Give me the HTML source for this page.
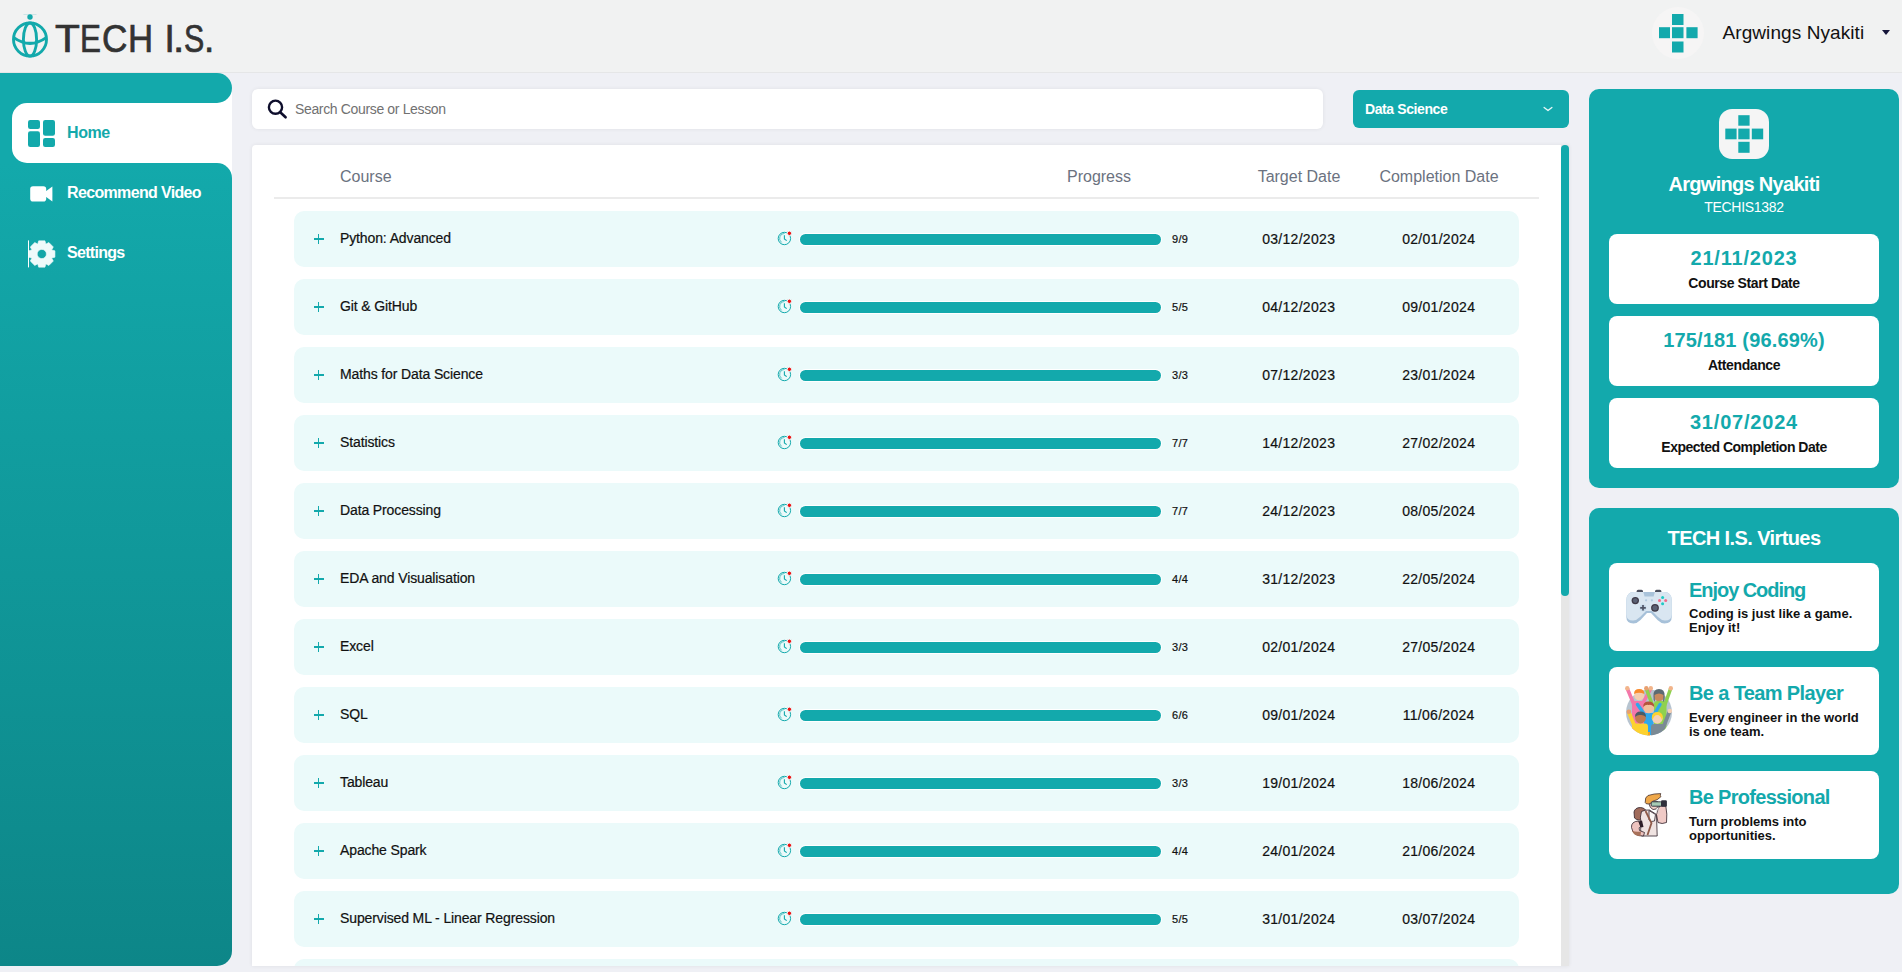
<!DOCTYPE html>
<html><head><meta charset="utf-8"><title>TECH I.S.</title>
<style>
*{margin:0;padding:0;box-sizing:border-box}
html,body{width:1902px;height:972px;overflow:hidden}
body{background:#eff0f5;font-family:"Liberation Sans",sans-serif;position:relative;color:#111}
.abs{position:absolute}
.header{position:absolute;left:0;top:0;width:1902px;height:73px;background:#f1f2f2;border-bottom:1px solid #e5e6e7}
.logo-text{position:absolute;left:55px;top:20.5px;font-size:37px;line-height:37px;color:#333;letter-spacing:-0.75px;white-space:nowrap;-webkit-text-stroke:0.7px #333}
.hdr-avatar{position:absolute;left:1652px;top:7px;width:52px;height:52px;border-radius:50%;background:#f6f5f5}
.hdr-name{position:absolute;left:1722.5px;top:23px;font-size:19px;line-height:19px;color:#111;white-space:nowrap;letter-spacing:0.08px}
.caret{position:absolute;left:1881.7px;top:29.6px;width:0;height:0;border-left:4.2px solid transparent;border-right:4.2px solid transparent;border-top:5.5px solid #16163a}

.sb-white{position:absolute;left:12px;top:88px;width:220px;height:90px;background:#fff}
.sb-tealleft{position:absolute;left:0;top:88px;width:40px;height:90px;background:#13a9ab}
.sb-top{position:absolute;left:0;top:73px;width:232px;height:30px;background:#13a9ab;border-radius:0 15px 15px 0}
.sb-home{position:absolute;left:12px;top:103px;width:220px;height:60px;background:#fff;border-radius:15px 0 0 15px}
.sb-low{position:absolute;left:0;top:163px;width:232px;height:803px;background:linear-gradient(#13a9ab,#0d8688);border-radius:0 15px 15px 0}
.nav{position:absolute;left:67px;font-size:16px;line-height:16px;white-space:nowrap;font-weight:bold}
.nav-home{top:125px;letter-spacing:-0.4px;color:#13a9ab}
.nav-rec{top:185px;letter-spacing:-0.65px;color:#fff}
.nav-set{top:245px;letter-spacing:-0.7px;color:#fff}

.search{position:absolute;left:252px;top:89px;width:1071px;height:40px;background:#fff;border-radius:6px;box-shadow:0 0 4px rgba(0,0,0,0.07)}
.search-ph{position:absolute;left:295px;top:102px;font-size:14px;line-height:14px;color:#717171;letter-spacing:-0.35px;white-space:nowrap}
.dd{position:absolute;left:1353px;top:90px;width:216px;height:38px;background:#13a9ac;border-radius:6px}
.dd-text{position:absolute;left:1365px;top:102px;font-size:14px;line-height:14px;color:#fff;font-weight:bold;letter-spacing:-0.4px;white-space:nowrap}

.tpanel{position:absolute;left:252px;top:145px;width:1317px;height:821px;background:#fff;overflow:hidden;border-radius:4px 0 0 0;box-shadow:0 0 4px rgba(0,0,0,0.07)}
.th{position:absolute;top:24px;font-size:16px;line-height:16px;color:#6b7280;white-space:nowrap}
.th-course{left:88px}
.th-prog{left:847px;transform:translateX(-50%)}
.th-target{left:1047px;transform:translateX(-50%)}
.th-comp{left:1187px;transform:translateX(-50%)}
.divider{position:absolute;left:22px;top:52px;width:1265px;height:2px;background:#ebebeb}
.row{position:absolute;left:42px;width:1225px;height:56px;background:#ebfafa;border-radius:10px}
.plus{position:absolute;left:19.5px;top:23px;width:10px;height:10px}
.plus:before{content:"";position:absolute;left:4.2px;top:0;width:1.7px;height:10px;background:#13a9ac}
.plus:after{content:"";position:absolute;left:0;top:4.2px;width:10px;height:1.7px;background:#13a9ac}
.cname{position:absolute;left:46px;top:20px;font-size:14px;line-height:14px;white-space:nowrap;color:#111;letter-spacing:-0.12px;-webkit-text-stroke:0.2px #111}
.clock{position:absolute;left:483px;top:19px}
.bar{position:absolute;left:505px;top:22px;width:363px;height:13px;background:#fff;border-radius:7px}
.fill{position:absolute;left:1px;top:1px;width:361px;height:11px;background:#13a9ac;border-radius:6px}
.cnt{position:absolute;left:878px;top:23px;font-size:11px;line-height:11px;white-space:nowrap;letter-spacing:0.3px;-webkit-text-stroke:0.2px #111}
.td,.cd{position:absolute;top:21px;font-size:14px;line-height:14px;white-space:nowrap;transform:translateX(-50%);letter-spacing:0.3px;-webkit-text-stroke:0.2px #111}
.td{left:1004.7px}
.cd{left:1144.7px}
.track{position:absolute;left:1309px;top:0;width:8px;height:821px;background:#e6e6e6}
.thumb{position:absolute;left:1309px;top:0;width:8px;height:451px;background:#13a9ac;border-radius:4px}

.rp{position:absolute;left:1589px;width:310px;background:#13a9ac;border-radius:10px}
.rp1{top:89px;height:399px}
.rp2{top:508px;height:386px}
.rp-avatar{position:absolute;left:1719px;top:109px;width:50px;height:50px;border-radius:13px;background:#f5f5f5}
.ctr{position:absolute;left:1744px;transform:translateX(-50%);white-space:nowrap;text-align:center}
.rp-name{top:174px;font-size:20px;line-height:20px;color:#fff;font-weight:bold;letter-spacing:-0.7px}
.rp-id{top:200px;font-size:14px;line-height:14px;color:#fff;letter-spacing:-0.3px}
.card{position:absolute;left:1609px;width:270px;background:#fff;border-radius:8px}
.card70{height:70px}
.cval{font-size:20px;line-height:20px;color:#13a9ac;font-weight:bold;letter-spacing:0.8px;margin-top:-2px}
.clab{font-size:14px;line-height:14px;color:#111;font-weight:bold;letter-spacing:-0.4px}
.vt-title{top:528px;font-size:20px;line-height:20px;color:#fff;font-weight:bold;letter-spacing:-0.6px}
.card88{height:88px}
.v-title{position:absolute;left:1689px;font-size:20px;line-height:20px;color:#13a9ac;font-weight:bold;letter-spacing:-0.9px;white-space:nowrap}
.v-desc{position:absolute;left:1689px;font-size:13px;line-height:14px;color:#111;font-weight:bold;letter-spacing:0px;white-space:nowrap}

.lg{position:absolute;top:19.5px;font-size:37px;line-height:37px;color:#333;white-space:nowrap;-webkit-text-stroke:0.7px #333;transform-origin:0 0}

</style></head>
<body>
<div class="header"></div>
<svg class="abs" style="left:10px;top:12px" width="42" height="48" viewBox="0 0 42 48">
 <path d="M13.5 2.3 H26.5" stroke="#13a9ab" stroke-width="0.6" opacity="0.35"/>
 <circle cx="20" cy="5" r="2.7" fill="#13a9ab"/>
 <circle cx="20" cy="27.5" r="16.5" fill="none" stroke="#13a9ab" stroke-width="2.9"/>
 <ellipse cx="20" cy="27.5" rx="6.6" ry="16.5" fill="none" stroke="#13a9ab" stroke-width="2.9"/>
 <path d="M3.8 25.6 Q20 37.2 36.2 25.6" fill="none" stroke="#13a9ab" stroke-width="3"/>
</svg>
<span class="lg" style="left:54.9px;transform:scale(1.1,1.04)">T</span><span class="lg" style="left:80.0px;transform:scale(0.85,1.04)">E</span><span class="lg" style="left:102.0px;transform:scale(0.95,1.04)">C</span><span class="lg" style="left:128.2px;transform:scale(0.94,1.04)">H</span><span class="lg" style="left:164.6px;transform:scale(1.0,1.04)">I</span><span class="lg" style="left:172.8px;transform:scale(1.1,1.04)">.</span><span class="lg" style="left:183.8px;transform:scale(0.82,1.04)">S</span><span class="lg" style="left:204.0px;transform:scale(1.0,1.04)">.</span>
<div class="hdr-avatar"></div>
<svg class="abs" style="left:1658px;top:13px" width="40" height="40" viewBox="0 0 40 40">
 <rect x="14" y="1" width="11.5" height="11" fill="#13a9ac"/>
 <rect x="1" y="14.2" width="11" height="11" fill="#13a9ac"/>
 <rect x="14" y="14.2" width="11.5" height="11" fill="#13a9ac"/>
 <rect x="28.4" y="14.2" width="11.2" height="11" fill="#13a9ac"/>
 <rect x="14" y="28.5" width="11.5" height="11" fill="#13a9ac"/>
</svg>
<div class="hdr-name">Argwings Nyakiti</div>
<div class="caret"></div>

<div class="sb-white"></div>
<div class="sb-tealleft"></div>
<div class="sb-top"></div>
<div class="sb-home"></div>
<div class="sb-low"></div>
<svg class="abs" style="left:28px;top:120px" width="27" height="27" viewBox="0 0 27 27">
 <rect x="0" y="0" width="12" height="9" rx="2.2" fill="#13a9ab"/>
 <rect x="0" y="11.3" width="12" height="15.7" rx="2.2" fill="#13a9ab"/>
 <rect x="15" y="0" width="12" height="15.8" rx="2.2" fill="#13a9ab"/>
 <rect x="15" y="18.1" width="12" height="8.9" rx="2.2" fill="#13a9ab"/>
</svg>
<div class="nav nav-home">Home</div>
<svg class="abs" style="left:30px;top:185.5px" width="24" height="17" viewBox="0 0 24 17">
 <rect x="0.2" y="0.2" width="16" height="15.4" rx="2.8" fill="#fff"/>
 <path d="M15.5 5.6 L22.4 0.4 V15.5 L15.5 10.4 Z" fill="#fff"/>
</svg>
<div class="nav nav-rec">Recommend Video</div>
<svg class="abs" style="left:28px;top:239.6px" width="28" height="28" viewBox="0 0 28 28" overflow="visible">
 <path fill="#eefafa" fill-rule="evenodd" stroke="#eefafa" stroke-width="0.6" stroke-linejoin="round" d="M9.75 3.99 L10.65 0.87 L16.95 0.87 L17.85 3.99 L18.02 4.06 L20.85 2.49 L25.31 6.95 L23.74 9.78 L23.81 9.95 L26.93 10.85 L26.93 17.15 L23.81 18.05 L23.74 18.22 L25.31 21.05 L20.85 25.51 L18.02 23.94 L17.85 24.01 L16.95 27.13 L10.65 27.13 L9.75 24.01 L9.58 23.94 L6.75 25.51 L2.29 21.05 L3.86 18.22 L3.79 18.05 L0.67 17.15 L0.67 10.85 L3.79 9.95 L3.86 9.78 L2.29 6.95 L6.75 2.49 L9.58 4.06 Z M18.40 14.00 A4.6 4.6 0 1 0 9.20 14.00 A4.6 4.6 0 1 0 18.40 14.00 Z"/>
 <rect x="0" y="0.4" width="1" height="27" fill="#ffffff"/>
</svg>
<div class="nav nav-set">Settings</div>

<div class="search"></div>
<svg class="abs" style="left:266px;top:98px" width="24" height="22" viewBox="0 0 24 22">
 <circle cx="9.5" cy="9.2" r="6.6" fill="none" stroke="#0e0e2c" stroke-width="2.4"/>
 <path d="M14.5 14.5 L19.6 19.3" stroke="#0e0e2c" stroke-width="2.6" stroke-linecap="round"/>
</svg>
<div class="search-ph">Search Course or Lesson</div>
<div class="dd"></div>
<div class="dd-text">Data Science</div>
<svg class="abs" style="left:1543px;top:106px" width="10" height="7" viewBox="0 0 10 7">
 <path d="M1.1 1.4 L5 4.6 L8.9 1.4" fill="none" stroke="#e8f8f8" stroke-width="1.3" stroke-linecap="round" stroke-linejoin="round"/>
</svg>

<div class="rp rp1"></div>
<div class="rp-avatar"></div>
<svg class="abs" style="left:1724px;top:114px" width="40" height="40" viewBox="0 0 40 40">
 <rect x="14.3" y="1.2" width="11.3" height="10.5" fill="#13a9ac"/>
 <rect x="1.3" y="14.6" width="11.3" height="10.7" fill="#13a9ac"/>
 <rect x="14.3" y="14.6" width="11.3" height="10.7" fill="#13a9ac"/>
 <rect x="27.8" y="14.6" width="11.4" height="10.7" fill="#13a9ac"/>
 <rect x="14.3" y="27.8" width="11.3" height="11" fill="#13a9ac"/>
</svg>
<div class="ctr rp-name">Argwings Nyakiti</div>
<div class="ctr rp-id">TECHIS1382</div>
<div class="card card70" style="top:234px"></div>
<div class="ctr cval" style="top:250px">21/11/2023</div>
<div class="ctr clab" style="top:276px">Course Start Date</div>
<div class="card card70" style="top:316px"></div>
<div class="ctr cval" style="top:332px;letter-spacing:0.15px">175/181 (96.69%)</div>
<div class="ctr clab" style="top:358px">Attendance</div>
<div class="card card70" style="top:398px"></div>
<div class="ctr cval" style="top:414px">31/07/2024</div>
<div class="ctr clab" style="top:440px;letter-spacing:-0.5px">Expected Completion Date</div>

<div class="rp rp2"></div>
<div class="ctr vt-title">TECH I.S. Virtues</div>
<div class="card card88" style="top:563px"></div>
<div class="v-title" style="top:579.5px;letter-spacing:-1.05px">Enjoy Coding</div>
<div class="v-desc" style="top:607px">Coding is just like a game.<br>Enjoy it!</div>
<div class="card card88" style="top:667px"></div>
<div class="v-title" style="top:683px;letter-spacing:-0.63px">Be a Team Player</div>
<div class="v-desc" style="top:711px">Every engineer in the world<br>is one team.</div>
<div class="card card88" style="top:771px"></div>
<div class="v-title" style="top:787px;letter-spacing:-0.7px">Be Professional</div>
<div class="v-desc" style="top:815px">Turn problems into<br>opportunities.</div>
<svg class="abs" style="left:1615px;top:580px" width="70" height="50" viewBox="0 0 70 50">
 <rect x="21.6" y="9.8" width="6.4" height="3.2" rx="1.5" fill="#4b4f5e"/>
 <rect x="40" y="9.8" width="6.4" height="3.2" rx="1.5" fill="#4b4f5e"/>
 <path d="M19 12.1 H49 Q56.8 12.1 56.8 21 V36.5 Q56.8 43.5 49.5 43.5 Q46 43.5 42.5 40 L36 33 H32 L25.5 40 Q22 43.5 18.5 43.5 Q11.3 43.5 11.3 36.5 V21 Q11.3 12.1 19 12.1 Z" fill="#a7c1d9"/>
 <path d="M19 12.1 H49 Q56.8 12.1 56.8 21 V34.5 Q56.8 40.5 50 40.5 Q46.5 40.5 43 37 L37 31 H31 L25 37 Q21.5 40.5 18 40.5 Q11.3 40.5 11.3 34.5 V21 Q11.3 12.1 19 12.1 Z" fill="#d9e6f1"/>
 <path d="M28.3 12.1 H39.9 L38.6 16.4 H29.6 Z" fill="#a9c3da"/>
 <circle cx="20.3" cy="20.6" r="3.7" fill="#3e3947"/><circle cx="20.3" cy="20.6" r="2.4" fill="#5a6073"/>
 <circle cx="40" cy="27.8" r="3.9" fill="#3e3947"/><circle cx="40" cy="27.8" r="2.6" fill="#5a6073"/>
 <circle cx="28" cy="27.8" r="3.4" fill="#c4d8e8"/>
 <path d="M28 25 V30.6 M25.2 27.8 H30.8" stroke="#4f5466" stroke-width="1.7"/>
 <circle cx="31.1" cy="20.3" r="1.1" fill="#b0c9df"/><circle cx="36.9" cy="20.3" r="1.1" fill="#b0c9df"/>
 <circle cx="47.6" cy="17.4" r="1.5" fill="#1ec9c4"/><circle cx="47.6" cy="23.7" r="1.5" fill="#1ec9c4"/>
 <circle cx="44.5" cy="20.6" r="1.5" fill="#f46b8a"/><circle cx="50.7" cy="20.6" r="1.5" fill="#f46b8a"/>
</svg>
<svg class="abs" style="left:1610px;top:670px" width="80" height="80" viewBox="0 0 80 80">
 <defs><clipPath id="tc"><circle cx="39" cy="42.5" r="23"/></clipPath></defs>
 <circle cx="39" cy="42.5" r="23" fill="#b7c4d0"/>
 <g stroke-linecap="round" fill="none" stroke-width="3.6">
  <path d="M17.5 19 L25 37" stroke="#f477aa"/><path d="M40.5 19 L33 33" stroke="#f477aa"/>
  <path d="M36.5 19 L42 34" stroke="#8fd14f"/><path d="M60.5 19 L53 40" stroke="#8fd14f"/>
 </g>
 <circle cx="17.3" cy="18.3" r="2.2" fill="#f2b48a"/><circle cx="40.8" cy="18.3" r="2.2" fill="#f2b48a"/>
 <circle cx="36.3" cy="18.3" r="2.2" fill="#e8a070"/><circle cx="60.8" cy="18.3" r="2.2" fill="#f2b48a"/>
 <g clip-path="url(#tc)">
  <rect x="22" y="31" width="14" height="30" rx="3" fill="#f477aa"/>
  <rect x="44" y="31" width="12.5" height="30" rx="3" fill="#8fd14f"/>
 </g>
 <circle cx="29.2" cy="25.5" r="5" fill="#f5cdb0"/><path d="M24 24 Q24 19 29.2 19 Q34.4 19 34.4 24 Q29 21.5 24 24 Z" fill="#f98a2c"/>
 <circle cx="49" cy="26" r="5.2" fill="#c98a5e"/><path d="M43.5 26 Q43 19 49 19 Q55 19 54.6 26 Q55 31 53 32 L53.5 25 Q49 22 44.5 25 L45 32 Q43 30 43.5 26Z" fill="#5c6b73"/>
 <g stroke-linecap="round" fill="none" stroke-width="3.4">
  <path d="M27.5 34.5 L33.5 43" stroke="#2fa8ec"/><path d="M50 34.5 L45 43" stroke="#2fa8ec"/>
 </g>
 <g clip-path="url(#tc)"><rect x="34" y="43" width="9.5" height="22" fill="#2fa8ec"/><rect x="37" y="62" width="3" height="4" fill="#f7a521"/></g>
 <circle cx="38.7" cy="38" r="5.3" fill="#f2c09c"/><path d="M33.2 37 Q33 31.5 38.7 31.5 Q44.4 31.5 44.2 37 Q41 34 38.7 35 Q36 34 33.2 37Z" fill="#b5533c"/>
 <path d="M19 42.5 L24.5 56" stroke="#fdd22f" stroke-width="3.8" stroke-linecap="round"/>
 <circle cx="18.9" cy="41.8" r="2.3" fill="#e8a070"/>
 <path d="M59.5 41.5 L53.5 57" stroke="#7b8a95" stroke-width="3.8" stroke-linecap="round"/>
 <circle cx="59.8" cy="41" r="2.3" fill="#f5d0b5"/>
 <g clip-path="url(#tc)">
  <rect x="22" y="53.5" width="16" height="14" rx="3" fill="#fdd22f"/>
  <rect x="41" y="54" width="14" height="14" rx="3" fill="#7b8a95"/>
 </g>
 <circle cx="30.5" cy="48" r="5.4" fill="#c07a50"/><path d="M25 47 Q25 41.5 30.5 41.5 Q36 41.5 36 47 Q33 44.5 30.5 45 Q27.5 44.5 25 47Z" fill="#4b5b66"/>
 <circle cx="47.3" cy="48.3" r="5.4" fill="#f5d0b5"/><path d="M41.8 47.5 Q41.8 42 47.3 42 Q52.8 42 52.8 47.5 L52 50 Q50.5 45 47.3 45 Q44 45 42.6 50Z" fill="#fdd22f"/>
</svg>
<svg class="abs" style="left:1610px;top:775px" width="80" height="80" viewBox="0 0 80 80">
 <g stroke="#2e1f28" stroke-width="0.8" stroke-linejoin="round">
 <path d="M24 37 Q25 32.5 30.5 32.5 Q35.5 33 36 36.5 L35 44.5 Q28 46.5 24.5 43 Z" fill="#a06b5b"/>
 <path d="M31.5 36.5 Q35 34.5 39.5 35 L46.5 39.5 L47.2 61 H31.5 Q30 55 31 48 Q29.5 42 31.5 36.5 Z" fill="#efe3e1"/>
 <path d="M39 35.5 L45.5 39.5 L44.5 46 Q41 47.5 39 45 Z" fill="#faf7f6"/>
 <path d="M21.5 52.5 Q21 46.5 28.5 46 L31 51 Q28 52.5 29.5 55.5 L34.5 57.5 L33.5 61 Q23 61.5 21.5 52.5 Z" fill="#edc3bf"/>
 <path d="M22 55.5 Q23.5 61 30.5 61 L31 56.5 Q25.5 57.5 22 55.5 Z" fill="#a8715a" stroke="none"/>
 <path d="M28.5 46.5 L32 45.5 L33.5 52 L30.5 52.5 Z" fill="#2e1f28" stroke="none"/>
 <path d="M46.5 39.5 Q48.5 33 49.5 31 L55.8 31 Q57.5 39 56.5 47.5 Q52 49.5 48 47.5 Z" fill="#f0cac6"/>
 <path d="M38.5 27.5 Q40 33.8 43 34.5 Q46.5 35 48 31.5 L47.5 26.5 Z" fill="#f3d2c9"/>
 </g>
 <path d="M35.5 36 L41.5 48 L37.5 60" fill="none" stroke="#8f5a48" stroke-width="1.8"/>
 <path d="M35.2 27.5 Q34.8 22 38 20.5 Q44 18.5 50.8 18.6 Q49.6 20.4 51 21.6 Q47.5 25.5 42.5 26.3 Q40.5 29.5 38.2 29 Q35.5 29 35.2 27.5Z" fill="#efa84a" stroke="#2e1f28" stroke-width="0.7"/>
 <rect x="41.2" y="26.8" width="10.5" height="4.4" rx="1" fill="#a6cbb4" stroke="#2d2d3a" stroke-width="0.9"/>
 <rect x="51" y="25.3" width="5.9" height="6.4" rx="1.3" fill="#2f2f3b"/>
 <path d="M46.8 33 V38.5 M48.8 33 V39.5" stroke="#dcd4d4" stroke-width="0.8"/>
</svg>

<div class="tpanel">
<div class="th th-course">Course</div>
<div class="th th-prog">Progress</div>
<div class="th th-target">Target Date</div>
<div class="th th-comp">Completion Date</div>
<div class="divider"></div>
<div class="row" style="top:66px">
<div class="plus"></div>
<div class="cname">Python: Advanced</div>
<svg class="clock" width="16" height="16" viewBox="0 0 16 16"><circle cx="7.4" cy="8.5" r="6.2" fill="none" stroke="#13a9ac" stroke-width="1"/><path d="M4.6 12.4 A5 5 0 0 1 7.6 3.4" fill="none" stroke="#13a9ac" stroke-width="0.8" opacity="0.85"/><path d="M7.4 5.3 V8.9 L9.7 10.6" fill="none" stroke="#13a9ac" stroke-width="1.1"/><circle cx="12.4" cy="3.3" r="2.2" fill="#ee1111" stroke="#ebfafa" stroke-width="1"/></svg>
<div class="bar"><div class="fill"></div></div>
<div class="cnt">9/9</div>
<div class="td">03/12/2023</div>
<div class="cd">02/01/2024</div>
</div>
<div class="row" style="top:134px">
<div class="plus"></div>
<div class="cname">Git &amp; GitHub</div>
<svg class="clock" width="16" height="16" viewBox="0 0 16 16"><circle cx="7.4" cy="8.5" r="6.2" fill="none" stroke="#13a9ac" stroke-width="1"/><path d="M4.6 12.4 A5 5 0 0 1 7.6 3.4" fill="none" stroke="#13a9ac" stroke-width="0.8" opacity="0.85"/><path d="M7.4 5.3 V8.9 L9.7 10.6" fill="none" stroke="#13a9ac" stroke-width="1.1"/><circle cx="12.4" cy="3.3" r="2.2" fill="#ee1111" stroke="#ebfafa" stroke-width="1"/></svg>
<div class="bar"><div class="fill"></div></div>
<div class="cnt">5/5</div>
<div class="td">04/12/2023</div>
<div class="cd">09/01/2024</div>
</div>
<div class="row" style="top:202px">
<div class="plus"></div>
<div class="cname">Maths for Data Science</div>
<svg class="clock" width="16" height="16" viewBox="0 0 16 16"><circle cx="7.4" cy="8.5" r="6.2" fill="none" stroke="#13a9ac" stroke-width="1"/><path d="M4.6 12.4 A5 5 0 0 1 7.6 3.4" fill="none" stroke="#13a9ac" stroke-width="0.8" opacity="0.85"/><path d="M7.4 5.3 V8.9 L9.7 10.6" fill="none" stroke="#13a9ac" stroke-width="1.1"/><circle cx="12.4" cy="3.3" r="2.2" fill="#ee1111" stroke="#ebfafa" stroke-width="1"/></svg>
<div class="bar"><div class="fill"></div></div>
<div class="cnt">3/3</div>
<div class="td">07/12/2023</div>
<div class="cd">23/01/2024</div>
</div>
<div class="row" style="top:270px">
<div class="plus"></div>
<div class="cname">Statistics</div>
<svg class="clock" width="16" height="16" viewBox="0 0 16 16"><circle cx="7.4" cy="8.5" r="6.2" fill="none" stroke="#13a9ac" stroke-width="1"/><path d="M4.6 12.4 A5 5 0 0 1 7.6 3.4" fill="none" stroke="#13a9ac" stroke-width="0.8" opacity="0.85"/><path d="M7.4 5.3 V8.9 L9.7 10.6" fill="none" stroke="#13a9ac" stroke-width="1.1"/><circle cx="12.4" cy="3.3" r="2.2" fill="#ee1111" stroke="#ebfafa" stroke-width="1"/></svg>
<div class="bar"><div class="fill"></div></div>
<div class="cnt">7/7</div>
<div class="td">14/12/2023</div>
<div class="cd">27/02/2024</div>
</div>
<div class="row" style="top:338px">
<div class="plus"></div>
<div class="cname">Data Processing</div>
<svg class="clock" width="16" height="16" viewBox="0 0 16 16"><circle cx="7.4" cy="8.5" r="6.2" fill="none" stroke="#13a9ac" stroke-width="1"/><path d="M4.6 12.4 A5 5 0 0 1 7.6 3.4" fill="none" stroke="#13a9ac" stroke-width="0.8" opacity="0.85"/><path d="M7.4 5.3 V8.9 L9.7 10.6" fill="none" stroke="#13a9ac" stroke-width="1.1"/><circle cx="12.4" cy="3.3" r="2.2" fill="#ee1111" stroke="#ebfafa" stroke-width="1"/></svg>
<div class="bar"><div class="fill"></div></div>
<div class="cnt">7/7</div>
<div class="td">24/12/2023</div>
<div class="cd">08/05/2024</div>
</div>
<div class="row" style="top:406px">
<div class="plus"></div>
<div class="cname">EDA and Visualisation</div>
<svg class="clock" width="16" height="16" viewBox="0 0 16 16"><circle cx="7.4" cy="8.5" r="6.2" fill="none" stroke="#13a9ac" stroke-width="1"/><path d="M4.6 12.4 A5 5 0 0 1 7.6 3.4" fill="none" stroke="#13a9ac" stroke-width="0.8" opacity="0.85"/><path d="M7.4 5.3 V8.9 L9.7 10.6" fill="none" stroke="#13a9ac" stroke-width="1.1"/><circle cx="12.4" cy="3.3" r="2.2" fill="#ee1111" stroke="#ebfafa" stroke-width="1"/></svg>
<div class="bar"><div class="fill"></div></div>
<div class="cnt">4/4</div>
<div class="td">31/12/2023</div>
<div class="cd">22/05/2024</div>
</div>
<div class="row" style="top:474px">
<div class="plus"></div>
<div class="cname">Excel</div>
<svg class="clock" width="16" height="16" viewBox="0 0 16 16"><circle cx="7.4" cy="8.5" r="6.2" fill="none" stroke="#13a9ac" stroke-width="1"/><path d="M4.6 12.4 A5 5 0 0 1 7.6 3.4" fill="none" stroke="#13a9ac" stroke-width="0.8" opacity="0.85"/><path d="M7.4 5.3 V8.9 L9.7 10.6" fill="none" stroke="#13a9ac" stroke-width="1.1"/><circle cx="12.4" cy="3.3" r="2.2" fill="#ee1111" stroke="#ebfafa" stroke-width="1"/></svg>
<div class="bar"><div class="fill"></div></div>
<div class="cnt">3/3</div>
<div class="td">02/01/2024</div>
<div class="cd">27/05/2024</div>
</div>
<div class="row" style="top:542px">
<div class="plus"></div>
<div class="cname">SQL</div>
<svg class="clock" width="16" height="16" viewBox="0 0 16 16"><circle cx="7.4" cy="8.5" r="6.2" fill="none" stroke="#13a9ac" stroke-width="1"/><path d="M4.6 12.4 A5 5 0 0 1 7.6 3.4" fill="none" stroke="#13a9ac" stroke-width="0.8" opacity="0.85"/><path d="M7.4 5.3 V8.9 L9.7 10.6" fill="none" stroke="#13a9ac" stroke-width="1.1"/><circle cx="12.4" cy="3.3" r="2.2" fill="#ee1111" stroke="#ebfafa" stroke-width="1"/></svg>
<div class="bar"><div class="fill"></div></div>
<div class="cnt">6/6</div>
<div class="td">09/01/2024</div>
<div class="cd">11/06/2024</div>
</div>
<div class="row" style="top:610px">
<div class="plus"></div>
<div class="cname">Tableau</div>
<svg class="clock" width="16" height="16" viewBox="0 0 16 16"><circle cx="7.4" cy="8.5" r="6.2" fill="none" stroke="#13a9ac" stroke-width="1"/><path d="M4.6 12.4 A5 5 0 0 1 7.6 3.4" fill="none" stroke="#13a9ac" stroke-width="0.8" opacity="0.85"/><path d="M7.4 5.3 V8.9 L9.7 10.6" fill="none" stroke="#13a9ac" stroke-width="1.1"/><circle cx="12.4" cy="3.3" r="2.2" fill="#ee1111" stroke="#ebfafa" stroke-width="1"/></svg>
<div class="bar"><div class="fill"></div></div>
<div class="cnt">3/3</div>
<div class="td">19/01/2024</div>
<div class="cd">18/06/2024</div>
</div>
<div class="row" style="top:678px">
<div class="plus"></div>
<div class="cname">Apache Spark</div>
<svg class="clock" width="16" height="16" viewBox="0 0 16 16"><circle cx="7.4" cy="8.5" r="6.2" fill="none" stroke="#13a9ac" stroke-width="1"/><path d="M4.6 12.4 A5 5 0 0 1 7.6 3.4" fill="none" stroke="#13a9ac" stroke-width="0.8" opacity="0.85"/><path d="M7.4 5.3 V8.9 L9.7 10.6" fill="none" stroke="#13a9ac" stroke-width="1.1"/><circle cx="12.4" cy="3.3" r="2.2" fill="#ee1111" stroke="#ebfafa" stroke-width="1"/></svg>
<div class="bar"><div class="fill"></div></div>
<div class="cnt">4/4</div>
<div class="td">24/01/2024</div>
<div class="cd">21/06/2024</div>
</div>
<div class="row" style="top:746px">
<div class="plus"></div>
<div class="cname">Supervised ML - Linear Regression</div>
<svg class="clock" width="16" height="16" viewBox="0 0 16 16"><circle cx="7.4" cy="8.5" r="6.2" fill="none" stroke="#13a9ac" stroke-width="1"/><path d="M4.6 12.4 A5 5 0 0 1 7.6 3.4" fill="none" stroke="#13a9ac" stroke-width="0.8" opacity="0.85"/><path d="M7.4 5.3 V8.9 L9.7 10.6" fill="none" stroke="#13a9ac" stroke-width="1.1"/><circle cx="12.4" cy="3.3" r="2.2" fill="#ee1111" stroke="#ebfafa" stroke-width="1"/></svg>
<div class="bar"><div class="fill"></div></div>
<div class="cnt">5/5</div>
<div class="td">31/01/2024</div>
<div class="cd">03/07/2024</div>
</div>
<div class="row" style="top:814px">
<div class="plus"></div>
<div class="cname">Unsupervised ML</div>
<svg class="clock" width="16" height="16" viewBox="0 0 16 16"><circle cx="7.4" cy="8.5" r="6.2" fill="none" stroke="#13a9ac" stroke-width="1"/><path d="M4.6 12.4 A5 5 0 0 1 7.6 3.4" fill="none" stroke="#13a9ac" stroke-width="0.8" opacity="0.85"/><path d="M7.4 5.3 V8.9 L9.7 10.6" fill="none" stroke="#13a9ac" stroke-width="1.1"/><circle cx="12.4" cy="3.3" r="2.2" fill="#ee1111" stroke="#ebfafa" stroke-width="1"/></svg>
<div class="bar"><div class="fill"></div></div>
<div class="cnt">3/3</div>
<div class="td">07/02/2024</div>
<div class="cd">10/07/2024</div>
</div>

<div class="track"></div><div class="thumb"></div>
</div>
</body></html>
